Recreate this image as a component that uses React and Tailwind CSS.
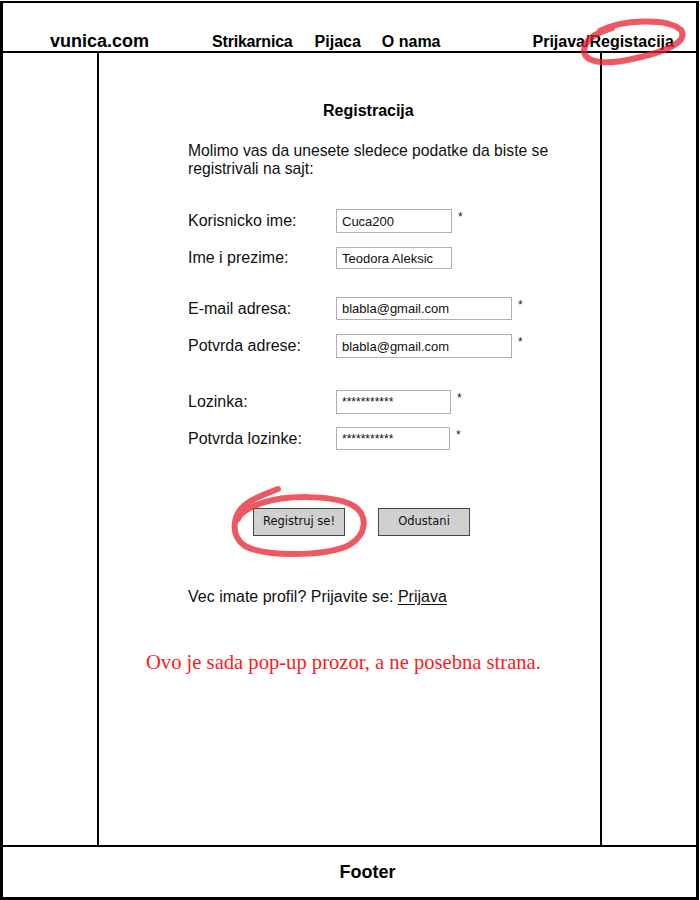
import React from 'react';

const sans = { fontFamily: '"Liberation Sans", Arial, sans-serif' };

function Field({ label, value, width, height, mt, star, small }) {
  return (
    <div className={`flex items-start ${mt}`}>
      <span className="w-[148px] self-center text-[16px] leading-[18px] text-[#111]">{label}</span>
      <input
        readOnly
        value={value}
        className={`${width} ${height} border border-[#b0b0b0] bg-white px-[5px] ${small ? 'text-[12px]' : 'text-[13px]'} text-[#111] outline-none`}
        style={sans}
      />
      {star && <span className="ml-[6px] mt-[2px] text-[12px] leading-none text-[#222]">*</span>}
    </div>
  );
}

export default function App() {
  return (
    <div className="relative w-[700px] h-[900px] bg-white" style={sans}>
      <div className="mt-px w-[699px] h-[899px] border-l-[3px] border-t-2 border-r-[3px] border-b-[3px] border-black flex flex-col">
        {/* header */}
        <div className="h-[50px] border-b-2 border-black flex items-baseline pt-[28px] text-[16px] font-bold leading-[20px] text-black">
          <span className="ml-[47px] text-[18px]">vunica.com</span>
          <span className="ml-[63px] tracking-[-0.2px]">Strikarnica</span>
          <span className="ml-[22px] mb-[3px]">Pijaca</span>
          <span className="ml-[21px]">O nama</span>
          <span className="ml-[92px]">Prijava/Registacija</span>
        </div>

        {/* body */}
        <div className="flex-1 flex">
          <div className="w-[96px] border-r-2 border-black" />
          <div className="w-[503px] border-r-2 border-black pt-[48px]">
            <div className="pl-[89px]">
              <h1 className="ml-[135px] text-[16px] font-bold leading-[20px]">Registracija</h1>
              <p className="mt-[21px] max-w-[370px] text-[15.7px] leading-[18px] text-[#111]">
                Molimo vas da unesete sledece podatke da biste se registrivali na sajt:
              </p>

              <div className="mt-[31px]">
                <Field label="Korisnicko ime:" value="Cuca200" width="w-[116px]" height="h-[24px]" mt="" star />
                <Field label="Ime i prezime:" value="Teodora Aleksic" width="w-[116px]" height="h-[22px]" mt="mt-[14px]" />
                <Field label="E-mail adresa:" value="blabla@gmail.com" width="w-[176px]" height="h-[23px]" mt="mt-[28px]" star />
                <Field label="Potvrda adrese:" value="blabla@gmail.com" width="w-[176px]" height="h-[24px]" mt="mt-[14px]" star />
                <Field label="Lozinka:" value="***********" width="w-[115px]" height="h-[24px]" mt="mt-[32px]" star small />
                <Field label="Potvrda lozinke:" value="***********" width="w-[114px]" height="h-[23px]" mt="mt-[13px]" star small />
              </div>

              <div className="mt-[58px] ml-[65px] flex gap-[33px]">
                <button
                  className="w-[92px] h-[28px] bg-[#d0d0d0] border-[1.5px] border-[#454545] text-[11.5px] text-[#111]"
                  style={{ fontFamily: '"DejaVu Sans", sans-serif' }}
                >
                  Registruj se!
                </button>
                <button
                  className="w-[92px] h-[28px] bg-[#d0d0d0] border-[1.5px] border-[#454545] text-[11.5px] text-[#111]"
                  style={{ fontFamily: '"DejaVu Sans", sans-serif' }}
                >
                  Odustani
                </button>
              </div>

              <p className="mt-[52px] text-[16px] leading-[18px] text-[#111]">
                Vec imate profil? Prijavite se: <span className="underline underline-offset-2">Prijava</span>
              </p>
            </div>

            <p
              className="mt-[44px] pl-[47px] text-[20.6px] leading-[24px] text-[#ff1a1a]"
              style={{ fontFamily: '"Liberation Serif", "Times New Roman", serif' }}
            >
              Ovo je sada pop-up prozor, a ne posebna strana.
            </p>
          </div>
          <div className="flex-1" />
        </div>

        {/* footer */}
        <div className="h-[52px] border-t-2 border-black flex items-center justify-center">
          <span className="ml-[36px] text-[18px] font-bold">Footer</span>
        </div>
      </div>

      {/* red hand-drawn marks */}
      <svg className="absolute inset-0 pointer-events-none" width="700" height="900">
        <g fill="none" stroke="#e8202e" strokeOpacity="0.75" strokeWidth="6" strokeLinecap="round" strokeLinejoin="round">
          <path d="M 600 30 C 622 18, 668 17, 681 29 C 690 41, 662 52, 632 58 C 606 64, 585 62, 584 50 C 584 40, 595 32, 612 27" />
          <path d="M 278 488 C 268 492, 255 496, 246 503 C 232 514, 230 535, 245 545 C 265 556, 320 555, 345 546 C 368 536, 370 512, 350 503 C 330 494, 285 494, 262 502 C 248 507, 240 512, 238 518" />
        </g>
      </svg>
    </div>
  );
}
